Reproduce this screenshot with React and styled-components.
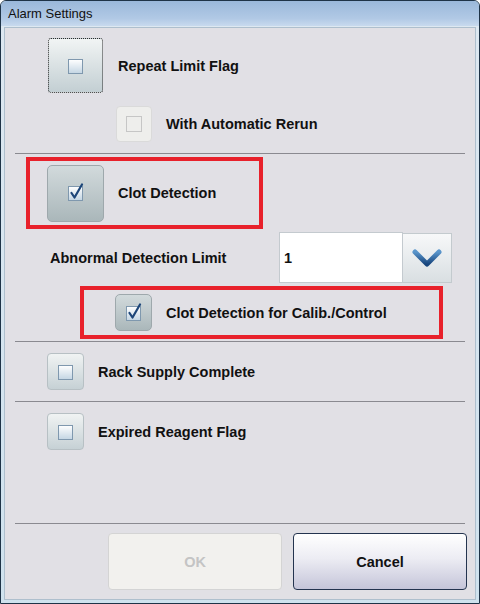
import styled, { createGlobalStyle, css } from 'styled-components';

const GlobalStyle = createGlobalStyle`
	html, body {
		margin: 0;
		padding: 0;
		width: 480px;
		height: 604px;
		overflow: hidden;
		background: #ffffff;
	}
	body {
		font-family: "Liberation Sans", Arial, sans-serif;
	}
	* {
		box-sizing: border-box;
	}
`;

const Window = styled.div`
	width: 480px;
	height: 604px;
	display: flex;
	flex-direction: column;
	border: 1px solid #1e3347;
	border-radius: 6px 6px 0 0;
	background: #d3e4ef;
	overflow: hidden;
`;

const TitleBar = styled.div`
	height: 25px;
	display: flex;
	align-items: center;
	padding-left: 7px;
	font-size: 13px;
	color: #111;
	background: linear-gradient(to bottom, #9ab8da 0%, #b1c9e5 70%, #c8daee 100%);
`;

const Frame = styled.div`
	flex: 1;
	display: flex;
	padding: 1px 3px 3px;
	background: linear-gradient(to bottom, #dde8f1, #cfe2ee);
`;

const Body = styled.div`
	flex: 1;
	display: flex;
	flex-direction: column;
	background: #e1e0e5;
	border: 1px solid #aebfcd;
`;

const Row = styled.div`
	display: flex;
	align-items: center;
	margin-top: ${(p) => p.$mt || 0}px;
	padding-left: ${(p) => p.$indent || 0}px;
	gap: ${(p) => p.$gap || 14}px;
`;

const Label = styled.span`
	font-size: 14.5px;
	font-weight: bold;
	color: #111;
`;

const variants = {
	focus: css`
		border: 1px dotted #2b2b2b;
		border-radius: 3px;
		background: linear-gradient(to bottom, #f1f4f4, #c3cfd3);
	`,
	normal: css`
		border: 1px solid #b7c0c4;
		border-radius: 4px;
		background: linear-gradient(to bottom, #f0f3f3, #c6d1d5);
	`,
	checked: css`
		border: 1px solid #9ea8ac;
		border-radius: 5px;
		background: linear-gradient(to bottom, #d2dadc, #aab7ba);
	`,
	disabled: css`
		border: 1px solid #dadada;
		border-radius: 4px;
		background: #eeeeec;
	`,
};

const CheckButton = styled.div`
	width: ${(p) => p.$size}px;
	height: ${(p) => p.$size}px;
	flex-shrink: 0;
	display: flex;
	align-items: center;
	justify-content: center;
	${(p) => variants[p.$variant]}
`;

const Mark = ({ checked, disabled }) => (
	<svg width="20" height="20" viewBox="0 0 20 20">
		<defs>
			<linearGradient id="boxFill" x1="0" y1="0" x2="0" y2="1">
				<stop offset="0" stopColor="#ffffff" />
				<stop offset="1" stopColor="#c3d5e3" />
			</linearGradient>
		</defs>
		{disabled ? (
			<rect x="2.5" y="2.5" width="15" height="15" fill="none" stroke="#c6c6c6" />
		) : (
			<rect x="2.5" y="3.5" width="14" height="14" fill="url(#boxFill)" stroke="#7f98ae" />
		)}
		{checked && (
			<path d="M5.5 10 L8.5 14.5 L16 1.5" fill="none" stroke="#1d4679" strokeWidth="2.2" strokeLinecap="round" strokeLinejoin="round" />
		)}
	</svg>
);

const Separator = styled.div`
	height: 1px;
	margin: ${(p) => p.$mt || 0}px 10px 0;
	background: #8a8a90;
	flex-shrink: 0;
`;

const Highlight = styled.div`
	display: flex;
	align-items: center;
	gap: 14px;
	margin-top: 3px;
	margin-left: ${(p) => p.$left}px;
	width: ${(p) => p.$width}px;
	height: ${(p) => p.$height}px;
	padding-left: ${(p) => p.$pad}px;
	border: 4px solid #e8212b;
`;

const LimitRow = styled.div`
	display: flex;
	align-items: center;
	margin-top: 3px;
	padding-left: 45px;
	height: 51px;
`;

const LimitLabel = styled(Label)`
	width: 229px;
`;

const Input = styled.div`
	width: 124px;
	height: 51px;
	display: flex;
	align-items: center;
	padding-left: 4px;
	background: #ffffff;
	border: 1px solid #c4cacf;
	font-size: 14.5px;
	font-weight: bold;
	color: #111;
`;

const DropButton = styled.div`
	width: 49px;
	height: 50px;
	display: flex;
	align-items: center;
	justify-content: center;
	border: 1px solid #c3cace;
	border-left: none;
	background: linear-gradient(to bottom, #f7f8f9, #d9dfe2);
`;

const Footer = styled.div`
	margin-top: auto;
	display: flex;
	flex-direction: column;
`;

const ButtonBar = styled.div`
	display: flex;
	justify-content: flex-end;
	gap: 11px;
	padding: 9px 8px 9px 0;
`;

const Button = styled.button`
	width: 174px;
	height: 57px;
	font-family: "Liberation Sans", Arial, sans-serif;
	font-size: 14.5px;
	font-weight: bold;
	border-radius: 4px;
	cursor: pointer;
	${(p) =>
		p.disabled
			? css`
					color: #c4c4c4;
					border: 1px solid #d4d4d4;
					background: #f2f1ee;
			  `
			: css`
					color: #111;
					border: 1px solid #24344f;
					background: linear-gradient(to bottom, #ffffff 0%, #ececf3 45%, #c5c5d9 100%);
			  `}
`;

const Chevron = () => (
	<svg width="32" height="22" viewBox="0 0 32 22">
		<defs>
			<linearGradient id="chev" x1="0" y1="0" x2="0" y2="1">
				<stop offset="0" stopColor="#5a96cc" />
				<stop offset="1" stopColor="#17457d" />
			</linearGradient>
		</defs>
		<path d="M4 5 L16 17 L28 5" fill="none" stroke="url(#chev)" strokeWidth="5" strokeLinecap="round" strokeLinejoin="round" />
	</svg>
);

const App = () => {
	return (
		<>
			<GlobalStyle />
			<Window>
				<TitleBar>Alarm Settings</TitleBar>
				<Frame>
					<Body>
						<Row $mt={10} $indent={43} $gap={15}>
							<CheckButton $size={55} $variant="focus">
								<Mark />
							</CheckButton>
							<Label>Repeat Limit Flag</Label>
						</Row>
						<Row $mt={13} $indent={111}>
							<CheckButton $size={36} $variant="disabled">
								<Mark disabled />
							</CheckButton>
							<Label>With Automatic Rerun</Label>
						</Row>
						<Separator $mt={11} />
						<Highlight $left={21} $width={237} $height={72} $pad={17}>
							<CheckButton $size={57} $variant="checked">
								<Mark checked />
							</CheckButton>
							<Label>Clot Detection</Label>
						</Highlight>
						<LimitRow>
							<LimitLabel>Abnormal Detection Limit</LimitLabel>
							<Input>1</Input>
							<DropButton>
								<Chevron />
							</DropButton>
						</LimitRow>
						<Highlight $left={75} $width={363} $height={53} $pad={31}>
							<CheckButton $size={37} $variant="checked">
								<Mark checked />
							</CheckButton>
							<Label>Clot Detection for Calib./Control</Label>
						</Highlight>
						<Separator $mt={2} />
						<Row $mt={11} $indent={42}>
							<CheckButton $size={37} $variant="normal">
								<Mark />
							</CheckButton>
							<Label>Rack Supply Complete</Label>
						</Row>
						<Separator $mt={11} />
						<Row $mt={11} $indent={42}>
							<CheckButton $size={37} $variant="normal">
								<Mark />
							</CheckButton>
							<Label>Expired Reagent Flag</Label>
						</Row>
						<Footer>
							<Separator />
							<ButtonBar>
								<Button disabled>OK</Button>
								<Button>Cancel</Button>
							</ButtonBar>
						</Footer>
					</Body>
				</Frame>
			</Window>
		</>
	);
};

export default App;
